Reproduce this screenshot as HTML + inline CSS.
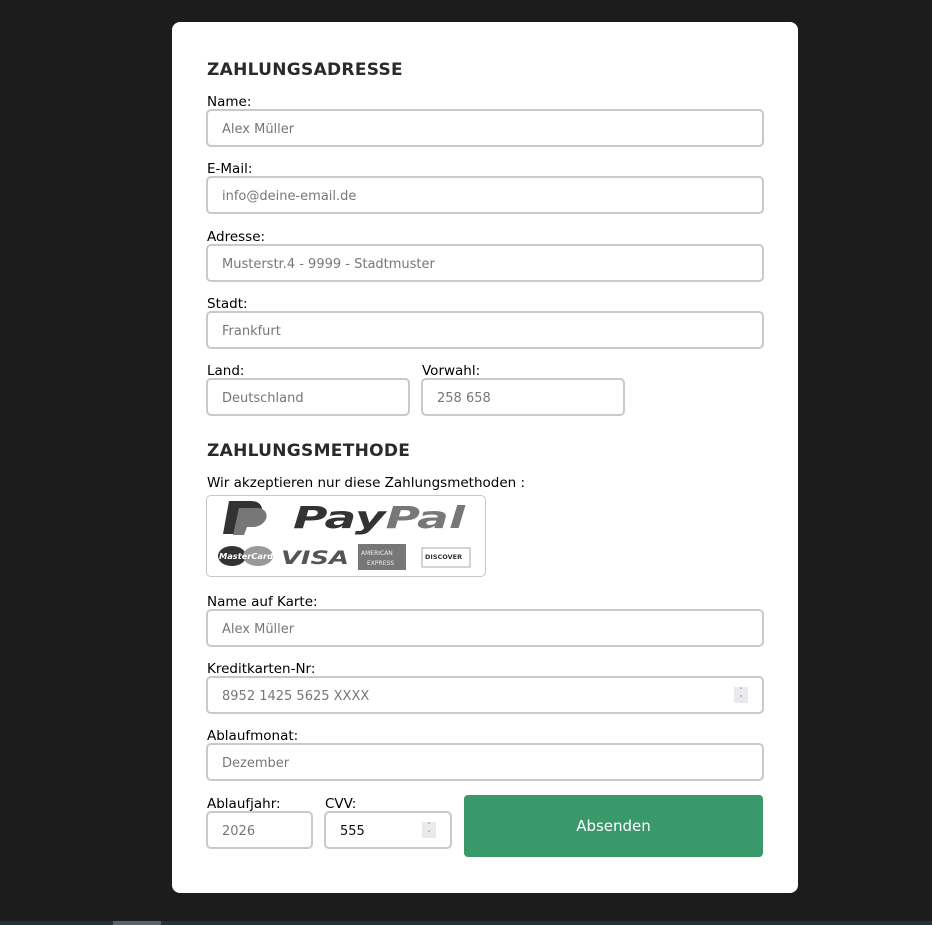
<!DOCTYPE html>
<html><head><meta charset="utf-8"><style>
*{box-sizing:border-box;margin:0;padding:0}
body{width:932px;height:925px;background:#1c1c1c;position:relative;overflow:hidden;font-family:"DejaVu Sans","Liberation Sans",sans-serif}
.card{position:absolute;left:172px;top:22px;width:626px;height:871px;background:#fff;border-radius:8px}
.a{position:absolute}
h2{position:absolute;left:207px;font-size:17px;font-weight:bold;color:#2a2a2a;letter-spacing:.3px}
.l{position:absolute;font-size:13.5px;color:#000;line-height:16px;top:0}
.i{position:absolute;height:38px;border:2px solid #c9c9c9;border-radius:5px;background:#fff;font-size:13px;color:#777;padding-left:14px;line-height:38px}
.sp{position:absolute;right:14px;top:9px;width:14px;height:16px;background:#e9e9ee;font-size:7px;line-height:8px;text-align:center;color:#888}
.bar{position:absolute;left:0;top:921px;width:932px;height:4px;background:#22333a}
</style></head><body>
<div class="card"></div>
<h2 style="top:60px">ZAHLUNGSADRESSE</h2>
<div class="l" style="left:207px;top:94px">Name:</div>
<div class="i" style="left:206px;top:109px;width:558px">Alex Müller</div>
<div class="l" style="left:207px;top:161px">E-Mail:</div>
<div class="i" style="left:206px;top:176px;width:558px">info@deine-email.de</div>
<div class="l" style="left:207px;top:229px">Adresse:</div>
<div class="i" style="left:206px;top:244px;width:558px">Musterstr.4 - 9999 - Stadtmuster</div>
<div class="l" style="left:207px;top:296px">Stadt:</div>
<div class="i" style="left:206px;top:311px;width:558px">Frankfurt</div>
<div class="l" style="left:207px;top:363px">Land:</div>
<div class="i" style="left:206px;top:378px;width:204px">Deutschland</div>
<div class="l" style="left:422px;top:363px">Vorwahl:</div>
<div class="i" style="left:421px;top:378px;width:204px">258 658</div>
<h2 style="top:441px">ZAHLUNGSMETHODE</h2>
<div class="l" style="left:207px;top:475px">Wir akzeptieren nur diese Zahlungsmethoden :</div>
<div class="a" style="left:206px;top:495px;width:280px;height:82px;border:1px solid #c8c8c8;border-radius:5px">
<svg width="278" height="80" viewBox="0 0 278 80">
<path d="M22 5h22c10 0 13 7 10 14s-9 9-16 9h-6l-3 10h-13z" fill="#333"/>
<path d="M32 12h18c8 0 11 6 9 11s-8 8-13 8h-6l-3 8h-11z" fill="#777"/>
<text x="86" y="32" font-family="DejaVu Sans" font-weight="bold" font-style="italic" font-size="30" fill="#333" textLength="172" lengthAdjust="spacingAndGlyphs">Pay<tspan fill="#777">Pal</tspan></text>
<ellipse cx="25" cy="60" rx="14" ry="10" fill="#333"/><ellipse cx="51" cy="60" rx="15" ry="10" fill="#999"/>
<text x="12" y="63" font-size="8" font-style="italic" font-weight="bold" fill="#fff" font-family="DejaVu Sans" textLength="54" lengthAdjust="spacingAndGlyphs">MasterCard</text>
<text x="74" y="68" font-family="DejaVu Sans" font-weight="bold" font-style="italic" font-size="19" fill="#555" textLength="68" lengthAdjust="spacingAndGlyphs">VISA</text>
<rect x="151" y="48" width="48" height="26" fill="#777"/>
<text x="154" y="59" font-size="6" fill="#eee">AMERICAN</text><text x="160" y="69" font-size="6" fill="#eee">EXPRESS</text>
<rect x="215" y="52" width="48" height="19" fill="#fff" stroke="#aaa"/>
<text x="218" y="63" font-size="6.5" font-weight="bold" fill="#333">DISCOVER</text>
</svg></div>
<div class="l" style="left:207px;top:594px">Name auf Karte:</div>
<div class="i" style="left:206px;top:609px;width:558px">Alex Müller</div>
<div class="l" style="left:207px;top:661px">Kreditkarten-Nr:</div>
<div class="i" style="left:206px;top:676px;width:558px">8952 1425 5625 XXXX<div class="sp" style="top:9px">˄<br>˅</div></div>
<div class="l" style="left:207px;top:728px">Ablaufmonat:</div>
<div class="i" style="left:206px;top:743px;width:558px">Dezember</div>
<div class="l" style="left:207px;top:796px">Ablaufjahr:</div>
<div class="i" style="left:206px;top:811px;width:107px">2026</div>
<div class="l" style="left:325px;top:796px">CVV:</div>
<div class="i" style="left:324px;top:811px;width:128px;color:#111">555<div class="sp" style="right:14px">˄<br>˅</div></div>
<div class="a" style="left:464px;top:795px;width:299px;height:62px;background:#3a996a;border-radius:4px;color:#fff;font-size:15px;text-align:center;line-height:62px">Absenden</div>
<div class="bar"></div><div class="a" style="left:113px;top:921px;width:48px;height:4px;background:#5a6468"></div>
</body></html>
